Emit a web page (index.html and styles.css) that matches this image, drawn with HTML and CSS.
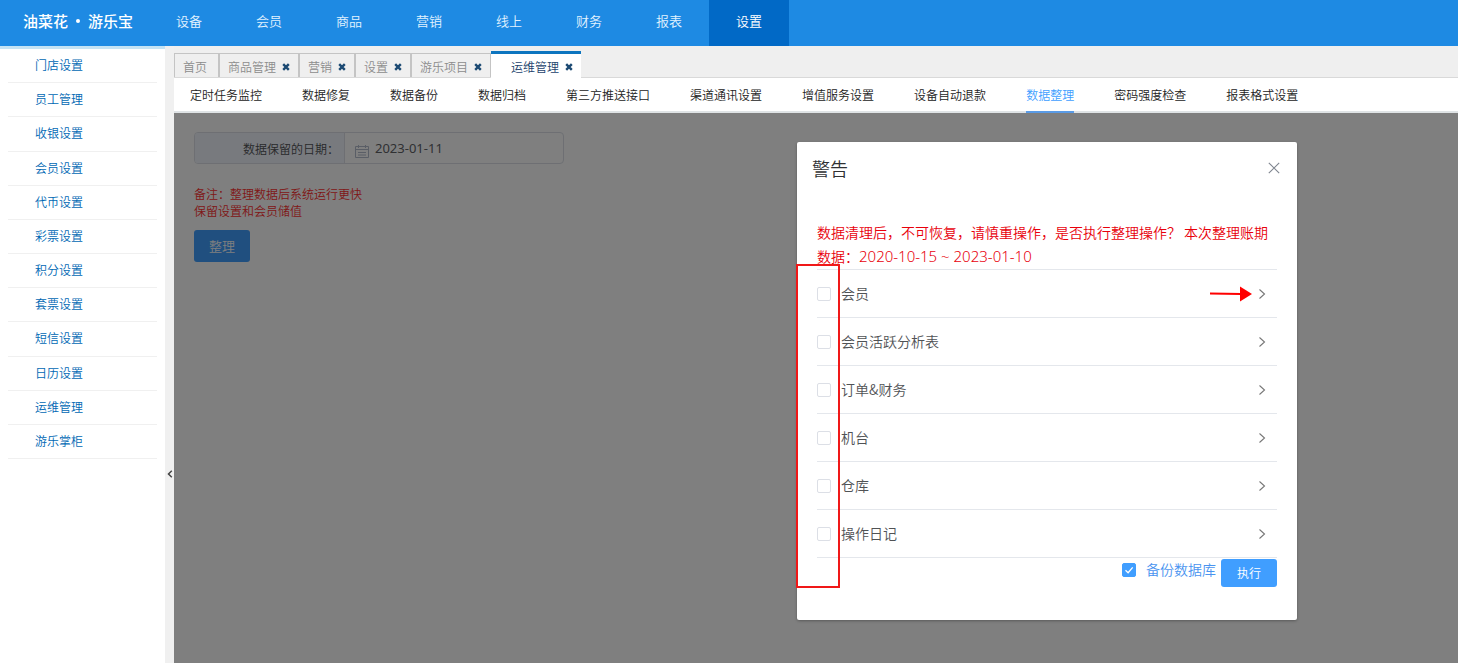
FILE: index.html
```html
<!DOCTYPE html>
<html lang="zh-CN">
<head>
<meta charset="utf-8">
<title>数据整理</title>
<link rel="stylesheet" href="styles.css">
</head>
<body>
<svg class="sprite" aria-hidden="true">
  <symbol id="cross" viewBox="0 0 8 8"><path d="M1.2 1.2 6.8 6.8M6.8 1.2 1.2 6.8" fill="none" stroke="currentColor" stroke-width="2.4"/></symbol>
  <symbol id="chevron" viewBox="0 0 8 12"><path d="M1.5 1.5 6.5 6 1.5 10.5" fill="none" stroke="currentColor" stroke-width="1.1"/></symbol>
</svg>
<header class="header">
  <div class="logo"><span>油菜花</span><i class="logo-dot"></i><span>游乐宝</span></div>
  <nav class="nav">
    <a href="#">设备</a><a href="#">会员</a><a href="#">商品</a><a href="#">营销</a><a href="#">线上</a><a href="#">财务</a><a href="#">报表</a><a href="#" class="active">设置</a>
  </nav>
</header>
<div class="body">
  <aside class="sidebar">
    <nav class="side-list">
      <a href="#">门店设置</a>
      <a href="#">员工管理</a>
      <a href="#">收银设置</a>
      <a href="#">会员设置</a>
      <a href="#">代币设置</a>
      <a href="#">彩票设置</a>
      <a href="#">积分设置</a>
      <a href="#">套票设置</a>
      <a href="#">短信设置</a>
      <a href="#">日历设置</a>
      <a href="#">运维管理</a>
      <a href="#">游乐掌柜</a>
    </nav>
  </aside>
  <div class="gutter">
    <button class="collapse" aria-label="收起"><svg viewBox="0 0 6 8" width="6" height="8"><path d="M4.8.8 1.5 4l3.3 3.2" fill="none" stroke="#444" stroke-width="1.5"/></svg></button>
  </div>
  <main class="main">
    <div class="tabs">
      <div class="tab"><a href="#">首页</a></div>
      <div class="tab"><a href="#">商品管理</a><button aria-label="关闭"><svg><use href="#cross"/></svg></button></div>
      <div class="tab"><a href="#">营销</a><button aria-label="关闭"><svg><use href="#cross"/></svg></button></div>
      <div class="tab"><a href="#">设置</a><button aria-label="关闭"><svg><use href="#cross"/></svg></button></div>
      <div class="tab"><a href="#">游乐项目</a><button aria-label="关闭"><svg><use href="#cross"/></svg></button></div>
      <div class="tab current"><a href="#">运维管理</a><button aria-label="关闭"><svg><use href="#cross"/></svg></button></div>
    </div>
    <nav class="subnav">
      <a href="#">定时任务监控</a><a href="#">数据修复</a><a href="#">数据备份</a><a href="#">数据归档</a><a href="#">第三方推送接口</a><a href="#">渠道通讯设置</a><a href="#">增值服务设置</a><a href="#">设备自动退款</a><a href="#" class="active">数据整理</a><a href="#">密码强度检查</a><a href="#">报表格式设置</a>
    </nav>
    <section class="content">
      <div class="field">
        <label for="keep-date">数据保留的日期：</label>
        <svg class="calendar" viewBox="0 0 14 14" width="14" height="14"><path d="M.5 2.5h13v11H.5zM.5 5.5h13M3.5 1v3M10.5 1v3M3 8.5h8M3 11h8" fill="none" stroke="#b4bccc"/></svg>
        <input id="keep-date" type="text" value="2023-01-11">
      </div>
      <p class="note">备注：整理数据后系统运行更快<br>保留设置和会员储值</p>
      <button class="tidy">整理</button>
      <div class="overlay">
        <div class="dialog" role="dialog" aria-labelledby="dialog-title">
          <div class="dialog-head">
            <h2 id="dialog-title">警告</h2>
            <button class="close" aria-label="关闭"><svg viewBox="0 0 12 12" width="12" height="12"><path d="m.8.8 10.4 10.4M11.2.8.8 11.2" fill="none" stroke="#7f858f" stroke-width="1.1"/></svg></button>
          </div>
          <p class="warning"><span>数据清理后，不可恢复，请慎重操作，是否执行整理操作？ 本次整理账期</span><span>数据：</span><span class="range">2020-10-15 ~ 2023-01-10</span></p>
          <div class="options">
            <div class="option"><input type="checkbox" id="o1"><label for="o1">会员</label><svg class="arrow" viewBox="0 0 42 16" width="42" height="16"><path d="M0 7.5 31 8" stroke="#f00" stroke-width="2"/><path d="M30 .5 42 8 30 15.5z" fill="#f00"/></svg><button aria-label="展开"><svg><use href="#chevron"/></svg></button></div>
            <div class="option"><input type="checkbox" id="o2"><label for="o2">会员活跃分析表</label><button aria-label="展开"><svg><use href="#chevron"/></svg></button></div>
            <div class="option"><input type="checkbox" id="o3"><label for="o3">订单&amp;财务</label><button aria-label="展开"><svg><use href="#chevron"/></svg></button></div>
            <div class="option"><input type="checkbox" id="o4"><label for="o4">机台</label><button aria-label="展开"><svg><use href="#chevron"/></svg></button></div>
            <div class="option"><input type="checkbox" id="o5"><label for="o5">仓库</label><button aria-label="展开"><svg><use href="#chevron"/></svg></button></div>
            <div class="option"><input type="checkbox" id="o6"><label for="o6">操作日记</label><button aria-label="展开"><svg><use href="#chevron"/></svg></button></div>
          </div>
          <div class="dialog-foot">
            <span class="backup"><span class="tick"><input type="checkbox" id="backup" checked><svg viewBox="0 0 14 14" width="14" height="14"><path d="m3.5 7.2 2.6 2.5 4.6-5.4" fill="none" stroke="#fff" stroke-width="1.3"/></svg></span><label for="backup">备份数据库</label></span>
            <button class="run">执行</button>
          </div>
          <div class="marker"></div>
        </div>
      </div>
    </section>
  </main>
</div>
</body>
</html>
```
FILE: styles.css
```css
* { box-sizing: border-box; }
body {
  margin: 0;
  min-height: 100vh;
  display: flex;
  flex-direction: column;
  font: 350 12px/18px "Noto Sans CJK SC", sans-serif;
  color: #222;
}
a { color: inherit; text-decoration: none; }
button { margin: 0; padding: 0; border: 0; background: none; font: inherit; cursor: pointer; }
h2, p { margin: 0; font-weight: 350; }
svg { display: block; }
.sprite { position: absolute; width: 0; height: 0; }

.header { display: flex; height: 46px; background: #1e8ae3; color: #fff; }
.logo {
  display: flex;
  align-items: center;
  gap: 8px;
  width: 149px;
  padding: 0 0 5px 23px;
  font-size: 15px;
  font-weight: 500;
}
.logo-dot { width: 4px; height: 4px; border-radius: 50%; background: #fff; }
.nav { display: flex; font-size: 13px; color: #e2f3ff; }
.nav a { width: 80px; line-height: 41px; text-align: center; }
.nav .active { background: #0169c6; color: #fff; }

.body { flex: 1; display: flex; background: #f0f0f0; }
.sidebar { width: 165px; border-top: 3px solid #c4e3f4; background: #fff; }
.side-list {
  display: grid;
  grid-auto-rows: 1fr;
  min-height: 410px;
  margin: 0 8px;
}
.side-list a {
  display: flex;
  align-items: center;
  padding: 0 0 1px 27px;
  border-bottom: 1px solid #f0f0f0;
  color: #0068b4;
}
.gutter { display: flex; align-items: center; justify-content: center; width: 9px; padding-top: 238px; }

.main { flex: 1; display: flex; flex-direction: column; min-width: 0; }
.tabs {
  display: flex;
  align-items: flex-end;
  height: 32px;
  border-bottom: 1px solid #d9d9d9;
  background: #efefef;
}
.tab {
  display: flex;
  align-items: center;
  gap: 6px;
  height: 24px;
  padding: 3px 8px 0;
  border: 1px solid #c4c4c4;
  border-width: 1px 2px 0 0;
  color: #8c8c8c;
}
.tab:first-child { padding: 3px 11px 0 8px; border-left-width: 1px; }
.tab:nth-last-child(2) { border-right-width: 1px; }
.tab svg { width: 8px; height: 8px; color: #1c4a73; }
.tab.current {
  height: 27px;
  margin-bottom: -1px;
  padding: 1px 8px 0 20px;
  border: 0;
  border-top: 3px solid #0d75bf;
  background: #fff;
  color: #1a3f6c;
}
.subnav {
  display: flex;
  gap: 40px;
  height: 35px;
  padding-left: 16px;
  border-bottom: 2px solid #dfe3e5;
  background: #fff;
  white-space: nowrap;
}
.subnav a { height: 35px; line-height: 34px; }
.subnav .active { border-bottom: 2px solid #5a9be6; color: #409eff; }

.content { position: relative; flex: 1; padding: 19px 20px; background: #fff; }
.field {
  display: flex;
  align-items: center;
  width: 370px;
  height: 32px;
  border: 1px solid #dcdfe6;
  border-radius: 4px;
  overflow: hidden;
}
.field label {
  align-self: stretch;
  width: 150px;
  padding-right: 5px;
  border-right: 1px solid #dcdfe6;
  background: #f0f4fc;
  line-height: 32px;
  text-align: right;
  color: #505255;
}
.calendar { margin: 6px 6px 0 10px; }
.field input {
  flex: 1;
  min-width: 0;
  padding: 0;
  border: 0;
  background: none;
  font: 13px/30px "Noto Sans", sans-serif;
  color: #606266;
}
.note { margin: 21px 0 11px; line-height: 17px; color: #ff3030; }
.tidy { width: 56px; height: 32px; border-radius: 3px; background: #409eff; color: #fff; font-size: 13px; }

.overlay {
  position: absolute;
  inset: 0;
  display: flex;
  align-items: flex-start;
  justify-content: flex-end;
  padding: 29px 161px 43px 0;
  background: rgba(0, 0, 0, .5);
}
.dialog {
  position: relative;
  width: 500px;
  padding: 14px 20px 33px;
  border-radius: 2px;
  background: #fff;
  box-shadow: 0 1px 3px rgba(0, 0, 0, .3);
  font-size: 14px;
  color: #505255;
}
.dialog-head { display: flex; justify-content: space-between; margin: 0 -3px 0 -5px; }
.dialog-head h2 { font-size: 18px; line-height: 24px; color: #303133; }
.close { align-self: flex-start; padding: 6px 0; }
.warning { margin-top: 40px; padding-bottom: 1px; line-height: 24px; color: #e8000b; }
.range { font-family: "Noto Sans", sans-serif; font-size: 15px; }
.options { border-top: 1px solid #e4e7ec; }
.option {
  display: flex;
  align-items: center;
  height: 48px;
  border-bottom: 1px solid #e4e7ec;
}
.option label { flex: 1; padding: 0 0 2px 10px; }
.option button { margin: 0 11px 0 6px; }
.option button svg { width: 8px; height: 12px; color: #777; }
input[type="checkbox"] {
  appearance: none;
  width: 14px;
  height: 14px;
  margin: 0;
  border: 1px solid #dcdfe6;
  border-radius: 2px;
  background: #fff;
}
input[type="checkbox"]:checked { border-color: #409eff; background: #409eff; }
.dialog-foot { display: flex; justify-content: flex-end; gap: 5px; padding-top: 1px; }
.backup { display: flex; align-items: center; gap: 10px; height: 22px; color: #4a94f0; }
.backup label { padding-bottom: 2px; }
.tick { display: grid; }
.tick > * { grid-area: 1 / 1; pointer-events: none; }
.tick input { pointer-events: auto; }
.run { width: 56px; height: 28px; border-radius: 3px; background: #409eff; color: #fff; font-size: 12px; }
.marker {
  position: absolute;
  top: 122px;
  left: -1px;
  width: 44px;
  height: 324px;
  border: 2px solid #f01818;
  pointer-events: none;
}
```
